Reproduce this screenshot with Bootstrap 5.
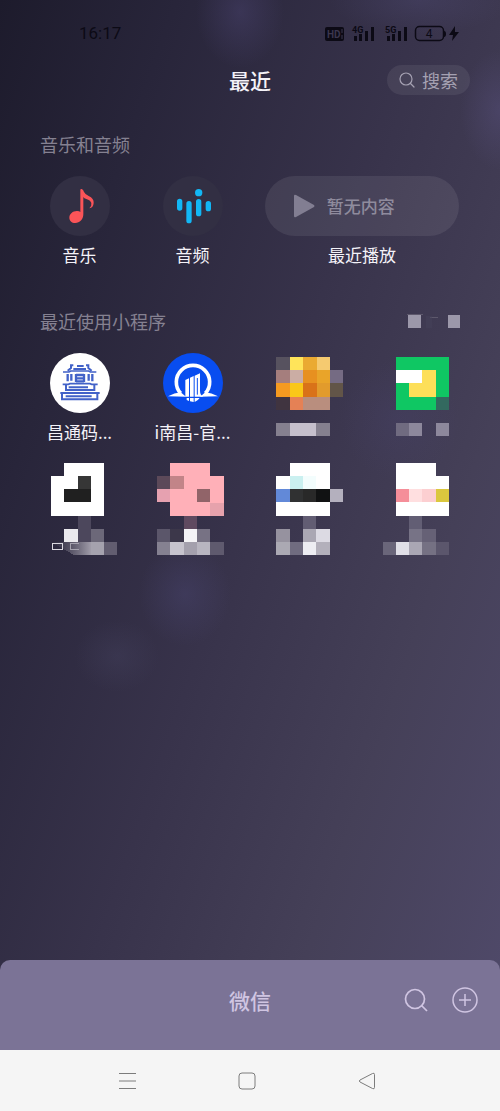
<!DOCTYPE html>
<html lang="zh-CN">
<head>
<meta charset="utf-8">
<meta name="viewport" content="width=device-width, initial-scale=1">
<title>最近</title>
<link rel="stylesheet" href="https://cdn.jsdelivr.net/npm/bootstrap@5.3.0/dist/css/bootstrap.min.css">
<style>
  body {
    font-family: "Noto Sans CJK SC", sans-serif;
    font-size: 18px;
    line-height: 26px;
    color: #f4f2f8;
    background:
      radial-gradient(ellipse 44px 56px at 240px 12px, rgba(84,76,128,.35), transparent),
      radial-gradient(ellipse 90px 34px at 420px 0, rgba(84,80,125,.3), transparent),
      radial-gradient(ellipse 46px 52px at 185px 594px, rgba(78,74,122,.35), transparent),
      radial-gradient(ellipse 42px 36px at 117px 656px, rgba(78,76,108,.25), transparent),
      radial-gradient(ellipse 60px 60px at 400px 420px, rgba(74,68,115,.25), transparent),
      radial-gradient(ellipse 40px 60px at 500px 110px, rgba(90,82,130,.4), transparent),
      linear-gradient(109deg, #1d1b2c 0, #28253a 20%, #38334b 48%, #454058 72%, #514b6c 100%);
  }
  a, a:hover { color: inherit; text-decoration: none; }
  svg { display: block; flex: none; }
  .status { padding: 22px 40px 0 79px; height: 46px; color: #0c0a15; font: 17px/22px Roboto, sans-serif; }
  .topbar { height: 68px; }
  .heading { font-size: 21px; line-height: 30px; font-weight: 500; }
  .find { width: 83px; height: 30px; margin-right: 30px; border-radius: 15px; background: rgba(255,255,255,.07); color: #a5a1b2; padding: 0 12px; gap: 7px; border: 0; }
  .media { padding-top: 17px; }
  .section-title { font-size: 18px; line-height: 26px; color: #858191; font-weight: 400; margin: 0; padding: 0 40px; }
  .tiles { padding: 19px 25px 0 23px; }
  .disc { width: 60px; height: 60px; background: #322f43; }
  .name { margin-top: 6px; font-size: 17px; }
  .player { width: 86%; height: 60px; border-radius: 30px; background: rgba(255,255,255,.08); color: #8f8b9d; padding: 0 0 0 29px; gap: 12px; font-size: 17px; font-weight: 500; border: 0; }
  .app { height: 110px; }
  .blocks { shape-rendering: crispEdges; }
  .sheet { height: 90px; padding-bottom: 10px; background: #7b7396; border-radius: 10px 10px 0 0; color: #d0c5e2; }
  .sheet-tools { gap: 24px; margin-right: 22px; }
  .keys { height: 61px; background: #f5f5f5; padding-right: 6px; }
  .key { width: 120px; }
  .plain { border: 0; background: none; padding: 0; color: inherit; }
</style>
</head>
<body class="d-flex flex-column min-vh-100">

<header>
  <div class="status d-flex justify-content-between">
    <time>16:17</time>
    <svg width="136" height="22" viewBox="324 22 136 22" fill="#0c0a15" font-family="Roboto, sans-serif" role="img" aria-label="信号与电量">
      <rect x="325" y="27" width="19" height="14" rx="2"/>
      <text x="327" y="38" font-size="10" fill="#3b364e" font-weight="700">HD</text>
      <path d="M342 29v4M342 35v4" stroke="#3b364e"/>
      <text x="352" y="33" font-size="9" font-weight="700">4G</text>
      <path d="M354 36h3v5h-3zM359 34h3v7h-3zM365 31h3v10h-3zM371 27h3v14h-3z"/>
      <text x="385" y="33" font-size="9" font-weight="700">5G</text>
      <path d="M387 36h3v5h-3zM392 34h3v7h-3zM398 31h3v10h-3zM404 27h3v14h-3z"/>
      <rect x="415.500" y="26.500" width="28" height="14" rx="4" fill="none" stroke="#0c0a15" stroke-width="1.500"/>
      <path d="M444 31q2 0 2 3t-2 3zM455 26l-6 9h4l-1 6 7-9h-4z"/>
      <text x="429" y="38" font-size="12" text-anchor="middle">4</text>
    </svg>
  </div>
  <div class="topbar row g-0 align-items-center">
    <div class="col"></div>
    <h1 class="heading col-auto m-0">最近</h1>
    <div class="col d-flex justify-content-end">
      <button class="find d-flex align-items-center" type="button">
        <svg width="16" height="16" viewBox="0 0 16 16" fill="none" stroke="currentColor" stroke-width="1.200" stroke-linecap="round"><circle cx="7" cy="7" r="6"/><path d="M11.500 11.500 15 15"/></svg>
        <span class="text-nowrap">搜索</span>
      </button>
    </div>
  </div>
</header>

<main class="flex-grow-1">
  <section class="media">
    <h2 class="section-title">音乐和音频</h2>
    <div class="tiles row g-0 text-center">
      <a class="col-3 d-flex flex-column align-items-center" href="#">
        <span class="disc rounded-circle">
          <svg width="60" height="60" viewBox="0 0 180 180" fill="#fa5458"><path d="M91 42q0-4 4-3 5 2 7 9 4 8 14 12 16 7 15 21-1 14-13 16 8-8 6-16-3-9-15-12-7-2-9-6v52c0 15-11 26-24 26-11 0-18-7-18-16 0-12 12-21 24-20 4 0 7 1 9 3z"/></svg>
        </span>
        <span class="name">音乐</span>
      </a>
      <a class="col-3 d-flex flex-column align-items-center" href="#">
        <span class="disc rounded-circle">
          <svg width="60" height="60" viewBox="0 0 180 180" stroke="#12b7f5" stroke-width="16" stroke-linecap="round"><path d="M50 76v20M78 83v51M107 77v36M136 83v15"/><circle cx="107" cy="50" r="11" fill="#12b7f5" stroke="none"/></svg>
        </span>
        <span class="name">音频</span>
      </a>
      <div class="col-6 d-flex flex-column align-items-center">
        <button class="player d-flex align-items-center" type="button">
          <svg width="21" height="24" viewBox="0 0 21 24" fill="#827e92"><path d="M0 2q0-2 2-1l18 10q1 1 0 2L2 23q-2 1-2-1z"/></svg>
          <span class="text-nowrap">暂无内容</span>
        </button>
        <span class="name">最近播放</span>
      </div>
    </div>
  </section>

  <section class="pt-4">
    <div class="d-flex justify-content-between align-items-center pt-3">
      <h2 class="section-title">最近使用小程序</h2>
      <a class="me-4 pe-3" href="#" aria-label="更多">
        <svg class="blocks" width="55" height="20" viewBox="406 313 55 20"><path d="M408 316h16M431 319h8" stroke="#5d586c" fill="none"/><path d="M427 318h6v12h-6z" fill="#45415a" opacity=".5"/><path d="M409 317h13v13h-13zM449 317h13v13h-13z" fill="#9c98aa"/></svg>
      </a>
    </div>
    <div class="tiles row g-0 text-center">
      <a class="app col-3 d-flex flex-column align-items-center" href="#">
        <svg width="60" height="60" viewBox="3 3 180 180">
          <circle cx="93" cy="93" r="90" fill="#fff"/>
          <g fill="none" stroke="#4262c8" stroke-width="7">
            <path d="M73 40h-7v8l-10 8M111 40h7v8l10 8M84 42h20M73 51h38" stroke-width="6"/>
            <path d="M42 60h18l5-3h54l5 3h18" stroke-width="5"/>
            <path d="M56 66v22M67 66v20M119 66v20M130 66v22M81 66v24M105 66v24M81 69h24M81 79h24M81 88h24"/>
            <path d="M41 97h17l5-2h60l5 2h18" stroke-width="5"/>
            <path d="M51 99v15h85V99M59 106h58" stroke-width="6"/>
            <path d="M34 123h118" stroke-width="6"/>
            <path d="M39 124v18h106v-19M50 133h78" stroke-width="6"/>
          </g>
        </svg>
        <span class="name">昌通码...</span>
      </a>
      <a class="app col-3 d-flex flex-column align-items-center" href="#">
        <svg width="60" height="60" viewBox="3 3 180 180">
          <circle cx="93" cy="93" r="90" fill="#084df0"/>
          <path d="M56 124a50 50 0 1 1 74 0" fill="none" stroke="#fff" stroke-width="11"/>
          <path d="M18 133q20-10 38-12l16 13zM168 133q-20-10-38-12l-16 13z" fill="#fff"/>
          <path d="M70 84l11-5v55H70zM84 77l11-5v62H84zM98 71l16-7v52q0 13 10 18H98z" fill="#fff"/>
          <path d="M74 138h7v9l-7-3zM84 138h11v12l-11-2zM98 138h15q-5 8-15 12z" fill="#fff"/>
          <path d="M106 78v50" stroke="#084df0" stroke-width="3"/>
        </svg>
        <span class="name text-nowrap">i南昌-官...</span>
      </a>
      <a class="app col-3 d-flex flex-column align-items-center" href="#" aria-label="小程序">
        <svg class="blocks" width="93" height="96" viewBox="259 353 93 96">
          <path fill="#57525f" d="M276 357h14v13h-14z"/><path fill="#ffe45a" d="M290 357h13v13h-13z"/><path fill="#eaaa32" d="M303 357h14v13h-14z"/><path fill="#f5ca70" d="M317 357h13v13h-13z"/>
          <path fill="#a57e7d" d="M276 370h14v13h-14z"/><path fill="#cbada4" d="M290 370h13v13h-13z"/><path fill="#e79020" d="M303 370h14v13h-14z"/><path fill="#e9a429" d="M317 370h13v13h-13z"/><path fill="#756b83" d="M330 370h13v13h-13z"/>
          <path fill="#f59a20" d="M276 383h14v14h-14z"/><path fill="#fac719" d="M290 383h13v14h-13z"/><path fill="#d97219" d="M303 383h14v14h-14z"/><path fill="#e29b2c" d="M317 383h13v14h-13z"/><path fill="#625548" d="M330 383h13v14h-13z"/>
          <path fill="#403440" d="M276 397h14v13h-14z"/><path fill="#e58155" d="M290 397h13v13h-13z"/><path fill="#b98e7e" d="M303 397h27v13h-27z"/>
          <path fill="#85808f" d="M276 423h54v13h-54z"/><path fill="#c5bfcc" d="M290 423h26v13h-26z"/>
        </svg>
      </a>
      <a class="app col-3 d-flex flex-column align-items-center" href="#" aria-label="小程序">
        <svg class="blocks" width="93" height="96" viewBox="372 353 93 96">
          <path fill="#0fc763" d="M396 357h53v40h-13v13h-40z"/><path fill="#33695f" d="M436 397h13v13h-13z"/>
          <path fill="#fff" d="M396 370h26v13h-26z"/><path fill="#fddf59" d="M422 370h14v27h-27v-14h13z"/>
          <path fill="#706b80" d="M396 423h13v13h-13z"/><path fill="#8d889c" d="M409 423h13v13h-13zM436 423h13v13h-13z"/>
        </svg>
      </a>
      <a class="app col-3 d-flex flex-column align-items-center" href="#" aria-label="小程序">
        <svg class="blocks" width="93" height="96" viewBox="33 463 93 96">
          <defs><linearGradient id="fade"><stop offset="0" stop-color="#6c6878" stop-opacity="0"/><stop offset="1" stop-color="#a09ca9"/></linearGradient></defs>
          <path fill="#fff" d="M64 463h40v53H51v-40h13z"/><path fill="#363636" d="M78 476h13v13H78z"/><path fill="#202020" d="M64 489h27v13H64z"/>
          <path fill="#4c475c" d="M78 516h13v26H78z"/><path fill="#eae9ed" d="M64 529h14v13H64z"/><path fill="#6c6879" d="M91 529h13v13H91z"/>
          <path fill="url(#fade)" d="M51 542h40v13H74z"/><path fill="#a5a2ae" d="M91 542h13v13H91z"/><path fill="#625d70" d="M104 542h13v13h-13z"/>
          <path d="M52 543h10v6H52z" fill="none" stroke="#d9d7df"/><path d="M79 543h-9v6h9" fill="none" stroke="#a5a2ae"/>
        </svg>
      </a>
      <a class="app col-3 d-flex flex-column align-items-center" href="#" aria-label="小程序">
        <svg class="blocks" width="93" height="96" viewBox="146 463 93 96">
          <path fill="#ffb0b8" d="M170 463h40v13h14v40h-54z"/><path fill="#5c4959" d="M157 476h13v13h-13z"/><path fill="#c28488" d="M170 476h14v13h-14z"/><path fill="#e6a1b0" d="M157 489h13v13h-13z"/><path fill="#916469" d="M197 489h13v13h-13z"/><path fill="#e6a2ac" d="M210 503h14v13h-14z"/>
          <path fill="#604a60" d="M184 516h13v13h-13z"/><path fill="#5b566a" d="M157 529h13v13h-13z"/><path fill="#3c374a" d="M170 529h14v13h-14z"/><path fill="#f4f3f6" d="M184 529h13v13h-13z"/><path fill="#777284" d="M197 529h13v13h-13z"/>
          <path fill="#858191" d="M157 542h13v13h-13z"/><path fill="#c6c3cd" d="M170 542h14v13h-14z"/><path fill="#a4a0ad" d="M184 542h13v13h-13z"/><path fill="#b8b5c0" d="M197 542h13v13h-13z"/><path fill="#5f5a6e" d="M210 542h14v13h-14z"/>
        </svg>
      </a>
      <a class="app col-3 d-flex flex-column align-items-center" href="#" aria-label="小程序">
        <svg class="blocks" width="93" height="96" viewBox="259 463 93 96">
          <path fill="#fff" d="M290 463h40v53h-54v-40h14z"/><path fill="#caf0f0" d="M290 476h13v13h-13z"/><path fill="#f3fdfd" d="M303 476h13v13h-13z"/>
          <path fill="#6289d8" d="M276 489h14v13h-14z"/><path fill="#303132" d="M290 489h26v13h-26z"/><path fill="#292929" d="M303 489h13v13h-13z"/><path fill="#111213" d="M316 489h14v13h-14z"/><path fill="#b4b0be" d="M330 489h13v13h-13z"/>
          <path fill="#625d73" d="M303 516h13v13h-13z"/><path fill="#96929f" d="M276 529h14v13h-14z"/><path fill="#aaa7b3" d="M303 529h13v13h-13z"/><path fill="#dcdae3" d="M316 529h14v13h-14z"/>
          <path fill="#aba9b3" d="M276 542h14v13h-14z"/><path fill="#706c80" d="M290 542h13v13h-13z"/><path fill="#ededf2" d="M303 542h13v13h-13z"/><path fill="#b3b0bb" d="M316 542h14v13h-14z"/>
        </svg>
      </a>
      <a class="app col-3 d-flex flex-column align-items-center" href="#" aria-label="小程序">
        <svg class="blocks" width="93" height="96" viewBox="372 463 93 96">
          <path fill="#fff" d="M396 463h40v13h13v40h-53z"/><path fill="#f58e99" d="M396 489h13v13h-13z"/><path fill="#ffdfe0" d="M409 489h13v13h-13z"/><path fill="#fccfd1" d="M422 489h14v13h-14z"/><path fill="#dac73e" d="M436 489h13v13h-13z"/>
          <path fill="#625e74" d="M409 516h13v13h-13z"/><path fill="#777386" d="M409 529h13v13h-13z"/><path fill="#666176" d="M422 529h14v13h-14z"/>
          <path fill="#6a667a" d="M383 542h13v13h-13z"/><path fill="#e0dfe7" d="M396 542h13v13h-13z"/><path fill="#aaa7b4" d="M409 542h13v13h-13z"/><path fill="#757183" d="M422 542h14v13h-14z"/><path fill="#5b566c" d="M436 542h13v13h-13z"/>
        </svg>
      </a>
    </div>
  </section>
</main>

<footer>
  <div class="sheet row g-0 align-items-center">
    <div class="col"></div>
    <div class="heading col-auto">微信</div>
    <div class="col">
      <div class="sheet-tools d-flex justify-content-end align-items-center">
        <button class="plain" type="button" aria-label="搜索"><svg width="24" height="24" viewBox="0 0 24 24" fill="none" stroke="currentColor" stroke-width="1.700"><circle cx="11" cy="11" r="9.500"/><path d="m17.500 17.500 5.500 5.500"/></svg></button>
        <button class="plain" type="button" aria-label="添加"><svg width="26" height="26" viewBox="0 0 26 26" fill="none" stroke="currentColor" stroke-width="1.500"><circle cx="13" cy="13" r="12"/><path d="M13 7v12M7 13h12"/></svg></button>
      </div>
    </div>
  </div>
  <nav class="keys d-flex justify-content-center align-items-center" aria-label="系统导航">
    <button class="key plain d-flex justify-content-center" type="button" aria-label="菜单"><svg width="18" height="18" viewBox="0 0 18 18" stroke="#7c7c7c"><path d="M1 1.500h17M1 9h17M1 16.500h17"/></svg></button>
    <button class="key plain d-flex justify-content-center" type="button" aria-label="主页"><svg width="18" height="18" viewBox="0 0 18 18" fill="none" stroke="#7c7c7c"><rect x="1" y="1" width="16" height="16" rx="3"/></svg></button>
    <button class="key plain d-flex justify-content-center" type="button" aria-label="返回"><svg width="18" height="18" viewBox="0 0 18 18" fill="none" stroke="#7c7c7c"><path d="M14.500 1.500q2-1 2 1v13q0 2-2 1L2 10q-1.500-1 0-2z"/></svg></button>
  </nav>
</footer>
<script src="https://cdn.jsdelivr.net/npm/bootstrap@5.3.0/dist/js/bootstrap.bundle.min.js"></script>
</body>
</html>
